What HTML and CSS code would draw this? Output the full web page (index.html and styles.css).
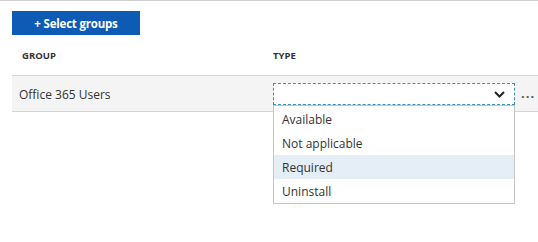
FILE: index.html
```html
<!DOCTYPE html>
<html>
<head>
<meta charset="utf-8">
<link rel="stylesheet" href="styles.css">
</head>
<body>
<div class="page">
  <button class="add-btn">+ Select groups</button>
  <div class="table">
    <div class="head">
      <div class="col-group">GROUP</div>
      <div class="col-type">TYPE</div>
    </div>
    <div class="row">
      <div class="col-group cell-name">Office 365 Users</div>
      <div class="col-type">
        <div class="select">
          <svg class="chev" width="11" height="7" viewBox="0 0 11 7"><path d="M1 1 L5.5 5.5 L10 1" fill="none" stroke="#222" stroke-width="2"/></svg>
          <ul class="menu">
            <li>Available</li>
            <li>Not applicable</li>
            <li class="hover">Required</li>
            <li>Uninstall</li>
          </ul>
        </div>
        <span class="more">...</span>
      </div>
    </div>
  </div>
</div>
</body>
</html>
```
FILE: styles.css
```css
html, body { margin: 0; padding: 0; background: #fff; }
body {
  font-family: "Open Sans", "Noto Sans", sans-serif;
  color: #333;
  width: 538px;
  height: 242px;
  overflow: hidden;
  border-top: 1px solid #cfcfcf;
  box-sizing: border-box;
}
.page { padding: 10px 0 0 12px; }
.add-btn {
  display: block;
  width: 128px;
  height: 24px;
  background: #0d5bb5;
  color: #fff;
  border: 0;
  font-family: inherit;
  font-weight: 700;
  font-size: 11.5px;
  padding: 0;
  letter-spacing: -0.2px;
}
.head {
  display: flex;
  height: 40px;
  align-items: center;
  font-size: 9.5px;
  font-weight: 700;
  color: #333;
  padding-top: 0;
}
.head .col-group { padding-left: 10px; }
.col-group { width: 261px; box-sizing: border-box; }
.col-type { flex: 1; display: flex; align-items: center; }
.row {
  display: flex;
  height: 35px;
  align-items: center;
  background: #f4f4f4;
  border-top: 1px solid #d4d4d4;
  border-bottom: 1px solid #d4d4d4;
}
.cell-name { padding-left: 7px; font-size: 12px; color: #333; padding-top: 1px; }
.select {
  position: relative;
  width: 242px;
  height: 22px;
  box-sizing: border-box;
  border: 1px dashed #3b8fb8;
  background: #fff;
  display: flex;
  align-items: center;
  justify-content: flex-end;
  padding-right: 9px;
  margin-top: 1px;
}
.chev { display: block; }
.more {
  margin-left: 6px;
  font-size: 13px;
  font-weight: 700;
  letter-spacing: 1px;
  color: #555;
  position: relative;
  top: -1px;
}
.menu {
  position: absolute;
  left: -1px;
  top: 21px;
  width: 242px;
  margin: 0;
  padding: 1px 0 0;
  list-style: none;
  background: #fff;
  border: 1px solid #c6c6c6;
  box-sizing: border-box;
}
.menu li {
  height: 24px;
  line-height: 26px;
  padding-left: 8px;
  font-size: 12px;
  color: #333;
}
.menu li.hover { background: #e5edf7; }
```
